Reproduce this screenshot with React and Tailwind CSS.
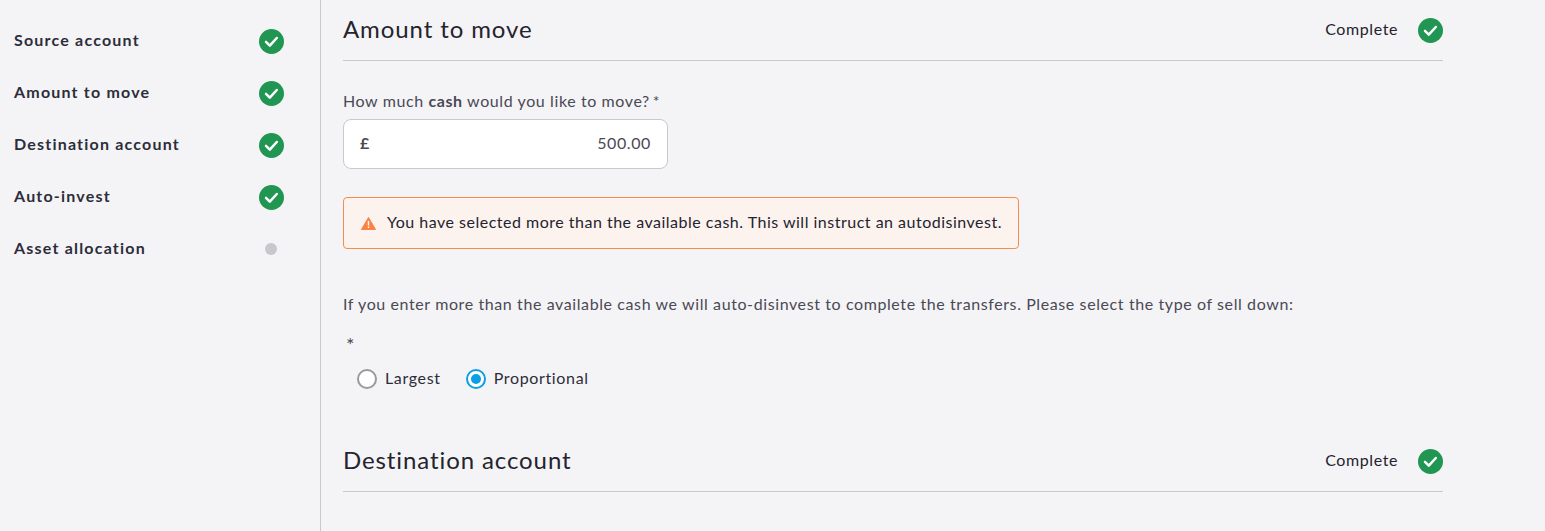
import React from "react";

const font = { fontFamily: '"Lato", "Noto Sans", sans-serif' };

function CheckBadge() {
  return (
    <svg width="25" height="25" viewBox="0 0 25 25" className="shrink-0">
      <circle cx="12.5" cy="12.5" r="12.5" fill="#219653" />
      <path d="M7 12.8l3.8 3.8 7-7.6" fill="none" stroke="#fff" strokeWidth="2.5" strokeLinecap="round" strokeLinejoin="round" />
    </svg>
  );
}

function SideItem({ label, done }) {
  return (
    <div className="flex items-center justify-between h-[52px] pl-[14px] pr-[36px]">
      <span className="pb-[2px] text-[16px] font-bold tracking-[1.2px] text-[#2d2d3a]">{label}</span>
      {done ? (
        <CheckBadge />
      ) : (
        <span className="w-[25px] flex justify-center pr-[1px]">
          <span className="block w-[12px] h-[12px] rounded-full bg-[#c8c7cc]" />
        </span>
      )}
    </div>
  );
}

function SectionHeader({ title }) {
  return (
    <div className="flex items-center justify-between h-[61px] border-b border-[#c9c8cc]">
      <h2 className="pb-[2px] text-[24px] tracking-[0.9px] text-[#24232e]">{title}</h2>
      <div className="flex items-center gap-[20px]">
        <span className="pb-[2px] text-[16px] tracking-[0.6px] text-[#24232e]">Complete</span>
        <CheckBadge />
      </div>
    </div>
  );
}

function Radio({ label, checked }) {
  return (
    <label className="flex items-center gap-[8px]">
      <span className={"w-[20px] h-[20px] rounded-full border-2 flex items-center justify-center bg-white " + (checked ? "border-[#0b9fe3]" : "border-[#9a999e]")}>
        {checked && <span className="block w-[10px] h-[10px] rounded-full bg-[#0b9fe3]" />}
      </span>
      <span className="pb-[2px] text-[16px] tracking-[0.65px] text-[#2d2d3a]">{label}</span>
    </label>
  );
}

export default function App() {
  return (
    <div className="flex h-[531px] bg-[#f4f4f6] overflow-hidden" style={font}>
      <aside className="w-[321px] shrink-0 border-r border-[#c9c8cc] pt-[15px]">
        <SideItem label="Source account" done />
        <SideItem label="Amount to move" done />
        <SideItem label="Destination account" done />
        <SideItem label="Auto-invest" done />
        <SideItem label="Asset allocation" />
      </aside>
      <main className="w-[1100px] ml-[22px]">
        <SectionHeader title="Amount to move" />
        <p className="mt-[30px] text-[16px] leading-[20px] tracking-[0.6px] text-[#4a4955]">
          How much <strong className="font-bold">cash</strong> would you like to move?<span className="ml-[3px]">*</span>
        </p>
        <div className="mt-[8px] w-[325px] h-[50px] flex items-center justify-between px-[16px] bg-white border border-[#c9c8cc] rounded-[8px] text-[16px] tracking-[0.6px] text-[#4a4955]">
          <span className="pb-[2px] font-bold">£</span>
          <span className="pb-[2px]">500.00</span>
        </div>
        <div className="mt-[28px] w-[676px] h-[52px] flex items-center gap-[11px] px-[17px] bg-[#fdf3ee] border border-[#f98a4f] rounded-[4px]">
          <svg width="15" height="13" viewBox="0 0 15 13" className="shrink-0">
            <path d="M7.5 0.5L14.6 12.6H0.4z" fill="#f98244" stroke="#f98244" strokeLinejoin="round" />
            <rect x="6.8" y="4" width="1.4" height="4.5" fill="#fff" />
            <rect x="6.8" y="9.5" width="1.4" height="1.5" fill="#fff" />
          </svg>
          <span className="pb-[2px] whitespace-nowrap text-[16px] tracking-[0.5px] text-[#24232e]">
            You have selected more than the available cash. This will instruct an autodisinvest.
          </span>
        </div>
        <p className="mt-[45px] text-[16px] leading-[20px] tracking-[0.6px] text-[#4a4955]">
          If you enter more than the available cash we will auto-disinvest to complete the transfers. Please select the type of sell down:
        </p>
        <p className="mt-[20px] pl-[3px] text-[20px] leading-[20px] text-[#4a4955]">*</p>
        <div className="mt-[12px] flex items-center gap-[25px] pl-[14px]">
          <Radio label="Largest" />
          <Radio label="Proportional" checked />
        </div>
        <div className="mt-[39px]">
          <SectionHeader title="Destination account" />
        </div>
      </main>
    </div>
  );
}
